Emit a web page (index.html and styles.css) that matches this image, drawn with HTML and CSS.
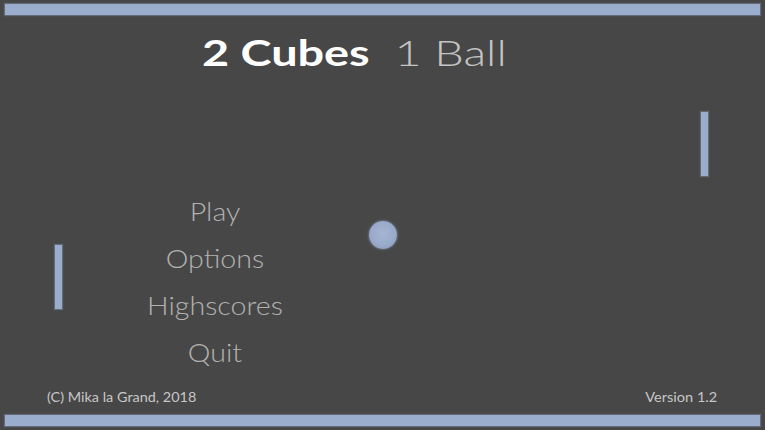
FILE: index.html
```html
<!DOCTYPE html>
<html>
<head>
<meta charset="utf-8">
<title>2 Cubes 1 Ball</title>
<link rel="stylesheet" href="styles.css">
</head>
<body>
<div class="screen">
  <div class="bar"></div>
  <div class="title-row">
    <h1 class="title"><span class="title-bold">2 Cubes</span><span class="title-light">1 Ball</span></h1>
  </div>
  <nav class="menu">
    <div class="menu-item">Play</div>
    <div class="menu-item">Options</div>
    <div class="menu-item">Highscores</div>
    <div class="menu-item">Quit</div>
  </nav>
  <footer class="footer">
    <span class="credit">(C) Mika la Grand, 2018</span>
    <span class="version">Version 1.2</span>
  </footer>
  <div class="bar bar-bottom"></div>

  <div class="paddle paddle-left"></div>
  <div class="paddle paddle-right"></div>
  <div class="ball"></div>
</div>
</body>
</html>
```

FILE: styles.css
```css
html, body {
  margin: 0;
  padding: 0;
  background: #474747;
}

.screen {
  position: relative;
  width: 765px;
  height: 430px;
  display: flex;
  flex-direction: column;
  background: #474747;
  font-family: Lato, "Open Sans", sans-serif;
  overflow: hidden;
}

.bar {
  height: 11px;
  margin: 4px 5px 0;
  background: #9badcd;
  box-shadow: 0 0 1px 1px rgba(155, 173, 205, 0.35);
}

.bar-bottom {
  margin-top: 10px;
}

.title-row {
  margin-top: 15px;
  padding-left: 202px;
}

.title {
  margin: 0;
  display: inline-flex;
  gap: 19px;
  font-size: 36px;
  line-height: 44px;
  font-weight: normal;
  transform: scaleX(1.3);
  transform-origin: left center;
}

.title-bold {
  font-weight: 700;
  color: #ffffff;
}

.title-light {
  font-weight: 300;
  color: #c4c4c4;
}

.menu {
  margin-top: 114px;
  width: 430px;
  text-align: center;
  font-size: 26px;
  font-weight: 300;
  line-height: 47px;
  color: #b2b2b2;
  transform: scaleX(1.1);
  transform-origin: 215px center;
}

.footer {
  margin-top: 13px;
  display: flex;
  justify-content: space-between;
  padding: 0 48px 0 47px;
  font-size: 13px;
  line-height: 16px;
  color: #c6c6c6;
}

.credit {
  transform: scaleX(1.11);
  transform-origin: left center;
}

.version {
  transform: scaleX(1.12);
  transform-origin: right center;
}

.paddle {
  position: absolute;
  width: 7px;
  height: 64px;
  background: #9badcd;
  box-shadow: 0 0 1px 1px rgba(155, 173, 205, 0.35);
}

.paddle-left {
  left: 55px;
  top: 245px;
}

.paddle-right {
  left: 701px;
  top: 112px;
}

.ball {
  position: absolute;
  left: 369px;
  top: 221px;
  width: 28px;
  height: 28px;
  border-radius: 50%;
  background: radial-gradient(circle at 50% 45%, #a6b5d2 0%, #9aaacb 55%, #8796b6 100%);
  box-shadow: 0 0 2px 1px rgba(140, 155, 185, 0.45);
}
```
